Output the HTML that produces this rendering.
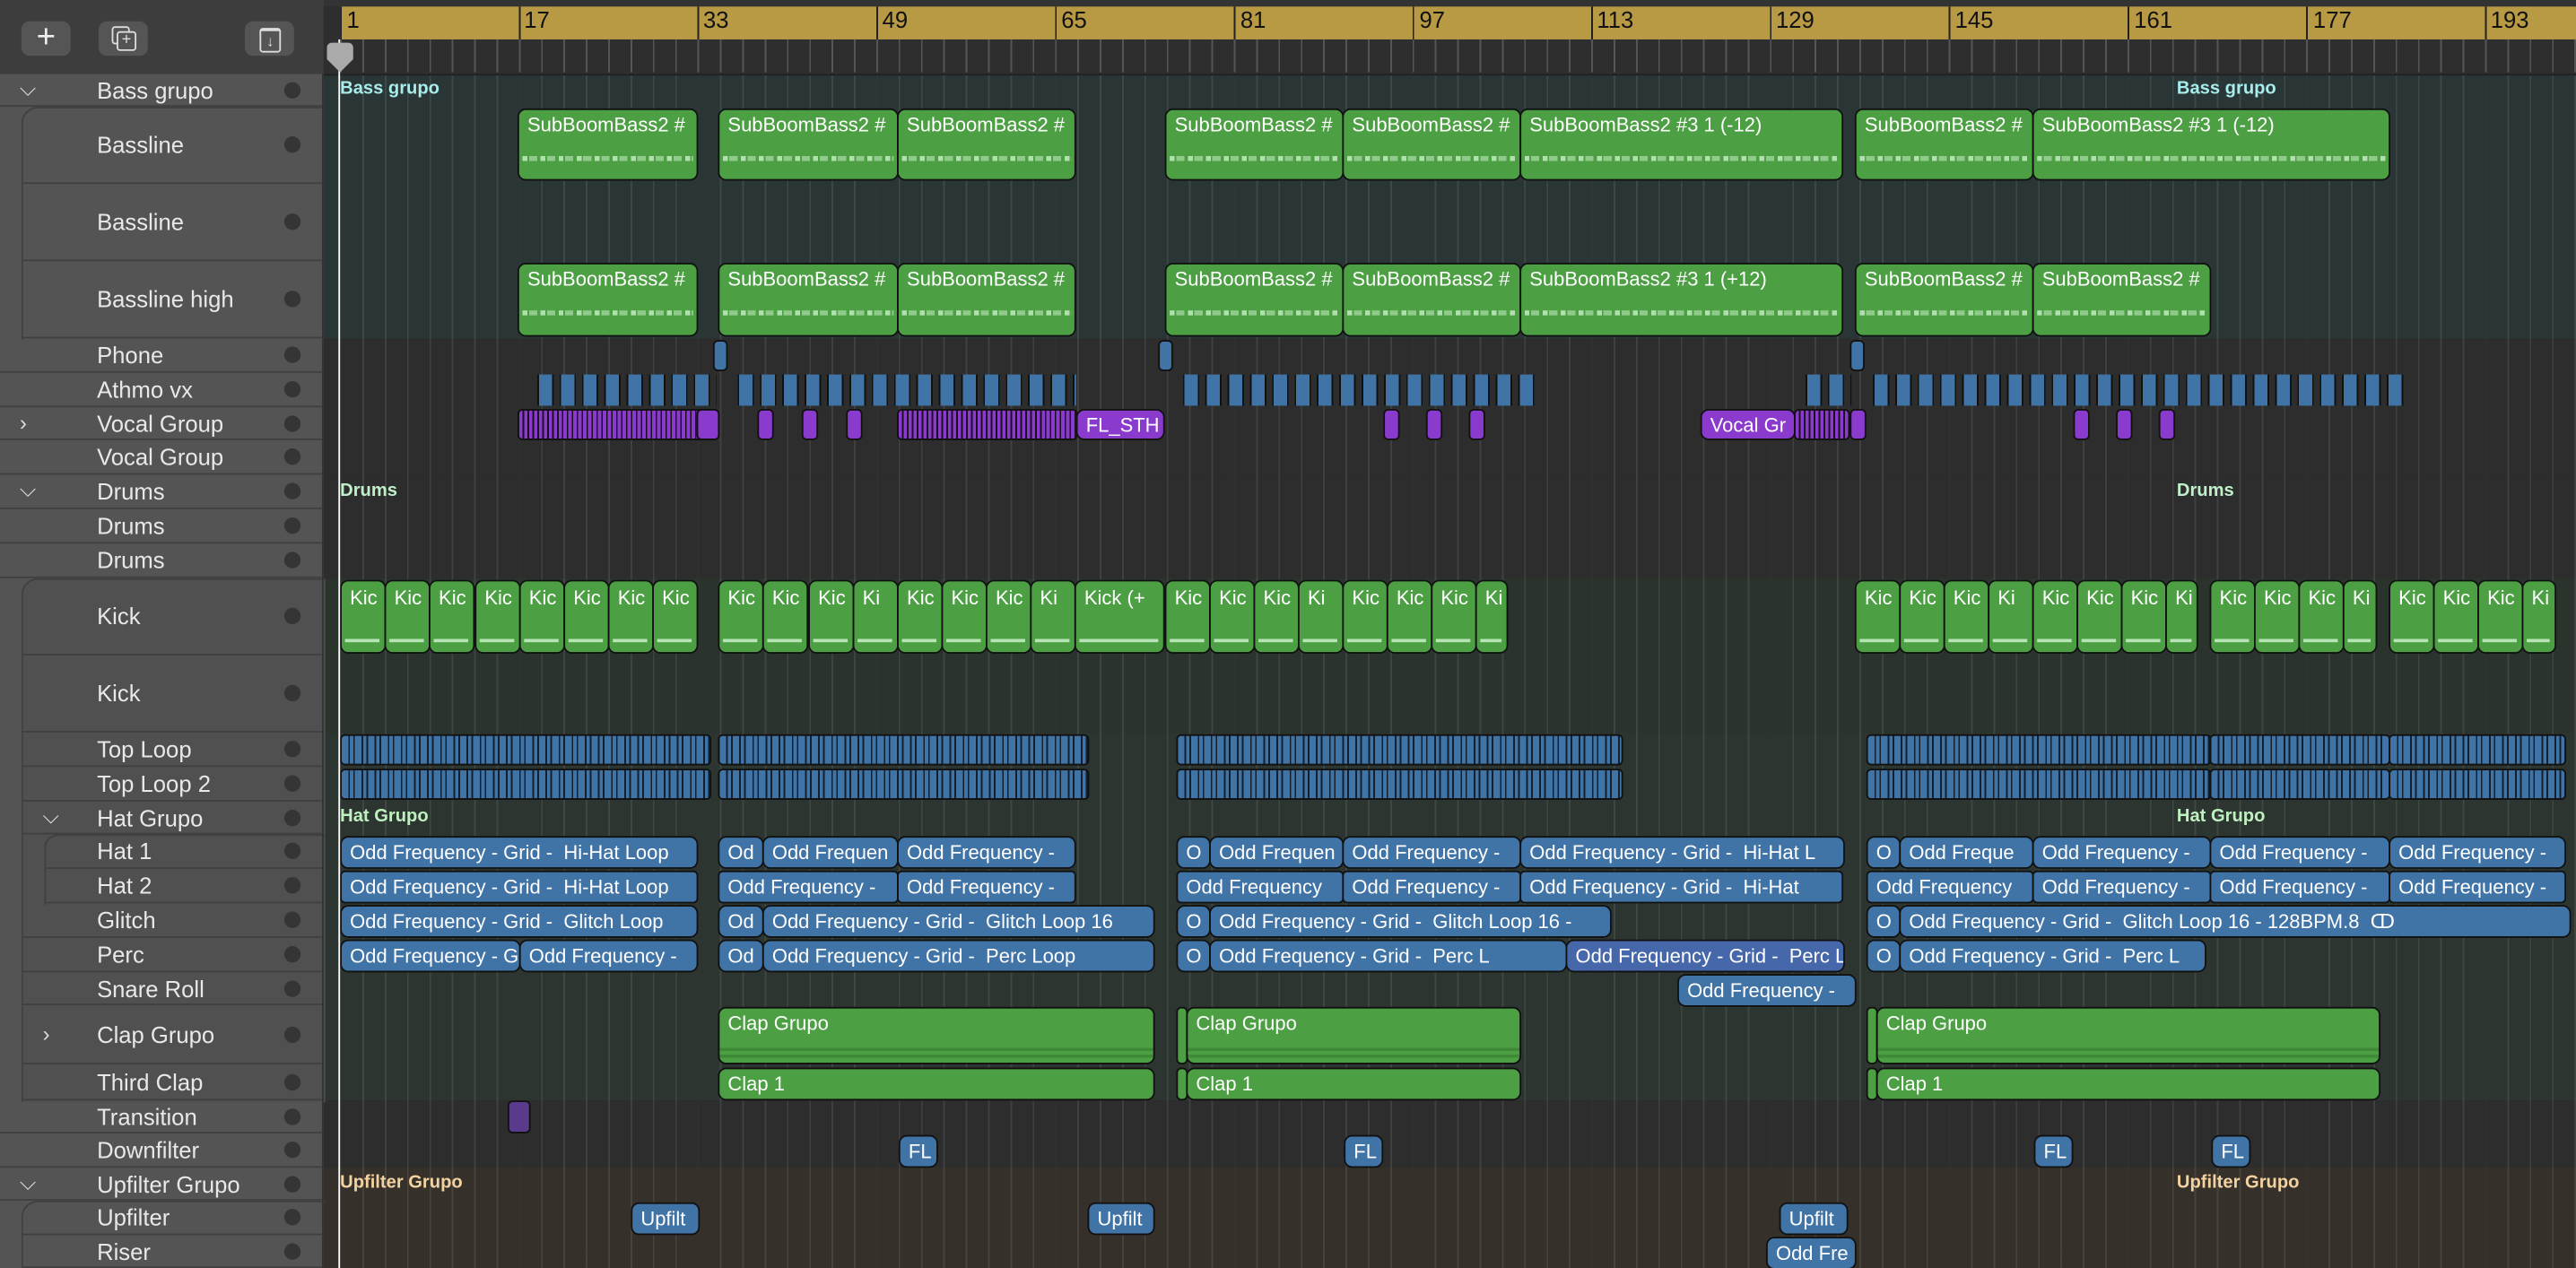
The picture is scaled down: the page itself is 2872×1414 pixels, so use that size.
<!DOCTYPE html>
<html><head><meta charset="utf-8"><style>
html,body{margin:0;padding:0;background:#2d2d2d;width:2872px;height:1414px;overflow:hidden}
#w{position:absolute;left:0;top:0;width:1568px;height:772px;transform:scale(1.83163);transform-origin:0 0;font-family:"Liberation Sans",sans-serif;overflow:hidden;background:#2d2d2d}
.a{position:absolute}
.bg{position:absolute;left:197px;right:0}
.lst{position:absolute;left:0;width:197px;top:45px;bottom:0;background:#545454}
.tr{position:absolute;left:0;width:197px;border-bottom:1px solid #404040;box-sizing:border-box;color:#e8e8e8;font-size:14px}
.tr span{position:absolute;left:59px;top:50%;transform:translateY(-50%)}
.tr i{position:absolute;left:173px;top:50%;margin-top:-5px;width:10px;height:10px;border-radius:50%;background:#353535}
.tr b{position:absolute;left:12px;top:50%;transform:translateY(-55%);font-weight:normal;font-size:13px;color:#ddd}
.r{position:absolute;border:1px solid #111;border-radius:3px;box-sizing:border-box;overflow:hidden;font-size:12px;color:#fff;white-space:nowrap;padding-left:5px;line-height:18px}
.g{background:#4ca043}
.b{background:#4073a6}
.p{background:#8a3acc}
.hp{background:repeating-linear-gradient(90deg,#8a3acc 0 2px,#1c1020 2px 3px)}
.hb{background:repeating-linear-gradient(90deg,#4073a6 0 4px,#142030 4px 5px,#4073a6 5px 7px,#142030 7px 8px)}
.seg{border-radius:5px}
.seg::after{content:"";position:absolute;left:2px;right:2px;top:28px;height:3px;background:repeating-linear-gradient(90deg,rgba(210,245,210,.75) 0 3px,transparent 3px 4px,rgba(210,245,210,.5) 4px 9px,transparent 9px 11px)}
.k{position:absolute;top:353px;height:45px;width:28px;box-sizing:border-box;border:1px solid #111;border-radius:5px;background:#4ca043;color:#fff;font-size:12px;padding:3px 0 0 5px;overflow:hidden;white-space:nowrap}
.k::after{content:"";position:absolute;left:2px;right:3px;top:35px;height:2px;background:rgba(210,245,210,.8)}
.lbl{position:absolute;font-size:11px;font-weight:bold}
.num{position:absolute;top:4px;font-size:14px;color:#111}
</style></head><body><div id="w">

<div class="bg" style="top:45px;height:161px;background:#2a3636"></div>
<div class="bg" style="top:206px;height:83px;background:#2d2d2d"></div>
<div class="bg" style="top:289px;height:63px;background:#2d2d2d"></div>
<div class="bg" style="top:352px;height:94px;background:#2b332d"></div>
<div class="bg" style="top:446px;height:224px;background:#2c3530"></div>
<div class="bg" style="top:670px;height:41px;background:#2d2d2d"></div>
<div class="bg" style="top:711px;height:61px;background:#36302a"></div>
<div class="a" style="left:207px;right:0;top:24px;bottom:0;background:repeating-linear-gradient(90deg,rgba(255,255,255,.09) 0 1px,transparent 1px 13.6px)"></div>
<div class="a" style="left:207px;right:0;top:24px;bottom:0;background:repeating-linear-gradient(90deg,rgba(0,0,0,.25) 0 1px,transparent 1px 108.8px)"></div>

<div class="a" style="left:0;top:0;width:1568px;height:4px;background:#333"></div>
<div class="a" style="left:0;top:0;width:197px;height:45px;background:#3d3d3d;border-bottom:1px solid #2a2a2a"></div>
<div class="a" style="left:13px;top:13px;width:30px;height:21px;background:#555;border-radius:5px;color:#eee;font-size:20px;text-align:center;line-height:20px">+</div>
<div class="a" style="left:60px;top:13px;width:30px;height:21px;background:#555;border-radius:5px"><div class="a" style="left:8px;top:3px;width:9px;height:9px;border:1px solid #ddd;border-radius:2px"></div><div class="a" style="left:11px;top:6px;width:10px;height:10px;border:1px solid #ddd;border-radius:2px;background:#555;color:#ddd;font-size:10px;line-height:10px;text-align:center">+</div></div>
<div class="a" style="left:149px;top:13px;width:30px;height:21px;background:#555;border-radius:5px"><div class="a" style="left:9px;top:4px;width:11px;height:12px;border:1px solid #ddd;border-radius:2px;border-top-width:2px;color:#ddd;font-size:9px;line-height:12px;text-align:center">↓</div></div>
<div class="a" style="left:197px;top:4px;width:1371px;height:41px;background:#2e2e2e;border-bottom:1px solid #222"></div>
<div class="a" style="left:207px;top:4px;width:1361px;height:20px;background:#b89a45"></div>
<div class="a" style="left:207px;top:24px;width:1361px;height:20px;background:repeating-linear-gradient(90deg,#555 0 1px,transparent 1px 13.6px)"></div>
<div class="a" style="left:207px;top:4px;width:1361px;height:20px;background:repeating-linear-gradient(90deg,#222 0 1px,transparent 1px 108.8px)"></div>
<div class="num" style="left:211px">1</div><div class="num" style="left:319px">17</div><div class="num" style="left:428px">33</div><div class="num" style="left:537px">49</div><div class="num" style="left:646px">65</div><div class="num" style="left:755px">81</div><div class="num" style="left:864px">97</div><div class="num" style="left:972px">113</div><div class="num" style="left:1081px">129</div><div class="num" style="left:1190px">145</div><div class="num" style="left:1299px">161</div><div class="num" style="left:1408px">177</div><div class="num" style="left:1516px">193</div>

<div class="lst"></div>
<div class="tr" style="top:45px;height:20px"><b>⌵</b><span>Bass grupo</span><i></i></div>
<div class="a" style="left:13px;top:65px;width:184px;height:141px;border-left:1px solid #404040;border-top:1px solid #404040;border-radius:10px 0 0 0"></div>
<div class="tr" style="top:65px;height:47px;left:14px;width:183px"><span style="left:45px">Bassline</span><i style="left:159px"></i></div>
<div class="tr" style="top:112px;height:47px;left:14px;width:183px"><span style="left:45px">Bassline</span><i style="left:159px"></i></div>
<div class="tr" style="top:159px;height:47px;left:14px;width:183px"><span style="left:45px">Bassline high</span><i style="left:159px"></i></div>
<div class="tr" style="top:206px;height:21px"><span>Phone</span><i></i></div>
<div class="tr" style="top:227px;height:21px"><span>Athmo vx</span><i></i></div>
<div class="tr" style="top:248px;height:20px"><b>›</b><span>Vocal Group</span><i></i></div>
<div class="tr" style="top:268px;height:21px"><span>Vocal Group</span><i></i></div>
<div class="tr" style="top:289px;height:21px"><b>⌵</b><span>Drums</span><i></i></div>
<div class="tr" style="top:310px;height:21px"><span>Drums</span><i></i></div>
<div class="tr" style="top:331px;height:21px"><span>Drums</span><i></i></div>
<div class="a" style="left:13px;top:352px;width:184px;height:318px;border-left:1px solid #404040;border-top:1px solid #404040;border-radius:10px 0 0 0;background:#505050"></div>
<div class="tr" style="top:352px;height:47px;left:14px;width:183px"><span style="left:45px">Kick</span><i style="left:159px"></i></div>
<div class="tr" style="top:399px;height:47px;left:14px;width:183px"><span style="left:45px">Kick</span><i style="left:159px"></i></div>
<div class="tr" style="top:446px;height:21px;left:14px;width:183px"><span style="left:45px">Top Loop</span><i style="left:159px"></i></div>
<div class="tr" style="top:467px;height:21px;left:14px;width:183px"><span style="left:45px">Top Loop 2</span><i style="left:159px"></i></div>
<div class="tr" style="top:488px;height:20px;left:14px;width:183px"><b style="left:12px">⌵</b><span style="left:45px">Hat Grupo</span><i style="left:159px"></i></div>
<div class="a" style="left:27px;top:508px;width:170px;height:42px;border-left:1px solid #404040;border-top:1px solid #404040;border-radius:8px 0 0 0"></div>
<div class="tr" style="top:508px;height:21px;left:28px;width:169px"><span style="left:31px">Hat 1</span><i style="left:145px"></i></div>
<div class="tr" style="top:529px;height:21px;left:28px;width:169px"><span style="left:31px">Hat 2</span><i style="left:145px"></i></div>
<div class="tr" style="top:550px;height:21px;left:14px;width:183px"><span style="left:45px">Glitch</span><i style="left:159px"></i></div>
<div class="tr" style="top:571px;height:21px;left:14px;width:183px"><span style="left:45px">Perc</span><i style="left:159px"></i></div>
<div class="tr" style="top:592px;height:20px;left:14px;width:183px"><span style="left:45px">Snare Roll</span><i style="left:159px"></i></div>
<div class="tr" style="top:612px;height:36px;left:14px;width:183px"><b style="left:12px">›</b><span style="left:45px">Clap Grupo</span><i style="left:159px"></i></div>
<div class="tr" style="top:648px;height:22px;left:14px;width:183px"><span style="left:45px">Third Clap</span><i style="left:159px"></i></div>
<div class="tr" style="top:670px;height:20px"><span>Transition</span><i></i></div>
<div class="tr" style="top:690px;height:21px"><span>Downfilter</span><i></i></div>
<div class="tr" style="top:711px;height:20px"><b>⌵</b><span>Upfilter Grupo</span><i></i></div>
<div class="a" style="left:13px;top:731px;width:184px;height:41px;border-left:1px solid #404040;border-top:1px solid #404040;border-radius:10px 0 0 0"></div>
<div class="tr" style="top:731px;height:21px;left:14px;width:183px"><span style="left:45px">Upfilter</span><i style="left:159px"></i></div>
<div class="tr" style="top:752px;height:20px;left:14px;width:183px"><span style="left:45px">Riser</span><i style="left:159px"></i></div>
<div class="a" style="left:196px;top:45px;width:1px;bottom:0;background:#333"></div>

<div class="lbl" style="left:207px;top:48px;color:#a8ecec">Bass grupo</div><div class="lbl" style="left:1325px;top:48px;color:#a8ecec">Bass grupo</div>
<div class="lbl" style="left:207px;top:293px;color:#bff0c8">Drums</div><div class="lbl" style="left:1325px;top:293px;color:#bff0c8">Drums</div>
<div class="lbl" style="left:207px;top:491px;color:#bff0c0">Hat Grupo</div><div class="lbl" style="left:1325px;top:491px;color:#bff0c0">Hat Grupo</div>
<div class="lbl" style="left:207px;top:714px;color:#f2d2a0">Upfilter Grupo</div><div class="lbl" style="left:1325px;top:714px;color:#f2d2a0">Upfilter Grupo</div>

<div class="r g seg" style="left:315px;top:66px;width:110px;height:44px">SubBoomBass2 #</div>
<div class="r g seg" style="left:437px;top:66px;width:110px;height:44px">SubBoomBass2 #</div>
<div class="r g seg" style="left:546px;top:66px;width:109px;height:44px">SubBoomBass2 #</div>
<div class="r g seg" style="left:709px;top:66px;width:109px;height:44px">SubBoomBass2 #</div>
<div class="r g seg" style="left:817px;top:66px;width:109px;height:44px">SubBoomBass2 #</div>
<div class="r g seg" style="left:925px;top:66px;width:197px;height:44px">SubBoomBass2 #3 1 (-12)</div>
<div class="r g seg" style="left:1129px;top:66px;width:109px;height:44px">SubBoomBass2 #</div>
<div class="r g seg" style="left:1237px;top:66px;width:218px;height:44px">SubBoomBass2 #3 1 (-12)</div>
<div class="r g seg" style="left:315px;top:160px;width:110px;height:45px">SubBoomBass2 #</div>
<div class="r g seg" style="left:437px;top:160px;width:110px;height:45px">SubBoomBass2 #</div>
<div class="r g seg" style="left:546px;top:160px;width:109px;height:45px">SubBoomBass2 #</div>
<div class="r g seg" style="left:709px;top:160px;width:109px;height:45px">SubBoomBass2 #</div>
<div class="r g seg" style="left:817px;top:160px;width:109px;height:45px">SubBoomBass2 #</div>
<div class="r g seg" style="left:925px;top:160px;width:197px;height:45px">SubBoomBass2 #3 1 (+12)</div>
<div class="r g seg" style="left:1129px;top:160px;width:109px;height:45px">SubBoomBass2 #</div>
<div class="r g seg" style="left:1237px;top:160px;width:109px;height:45px">SubBoomBass2 #</div>

<div class="r b" style="left:434px;top:207px;width:9px;height:19px"></div>
<div class="r b" style="left:705px;top:207px;width:9px;height:19px"></div>
<div class="r b" style="left:1126px;top:207px;width:9px;height:19px"></div>
<div class="a" style="left:327px;top:228px;width:109px;height:19px;background:repeating-linear-gradient(90deg,#111 0 1px,#4073a6 1px 9px,#111 9px 10px,transparent 10px 13.6px)"></div>
<div class="a" style="left:449px;top:228px;width:206px;height:19px;background:repeating-linear-gradient(90deg,#111 0 1px,#4073a6 1px 9px,#111 9px 10px,transparent 10px 13.6px)"></div>
<div class="a" style="left:720px;top:228px;width:215px;height:19px;background:repeating-linear-gradient(90deg,#111 0 1px,#4073a6 1px 9px,#111 9px 10px,transparent 10px 13.6px)"></div>
<div class="a" style="left:1099px;top:228px;width:28px;height:19px;background:repeating-linear-gradient(90deg,#111 0 1px,#4073a6 1px 9px,#111 9px 10px,transparent 10px 13.6px)"></div>
<div class="a" style="left:1140px;top:228px;width:324px;height:19px;background:repeating-linear-gradient(90deg,#111 0 1px,#4073a6 1px 9px,#111 9px 10px,transparent 10px 13.6px)"></div>
<div class="r hp" style="left:315px;top:249px;width:123px;height:19px"></div>
<div class="r p" style="left:424px;top:249px;width:14px;height:19px"></div>
<div class="r p" style="left:461px;top:249px;width:10px;height:19px"></div>
<div class="r p" style="left:488px;top:249px;width:10px;height:19px"></div>
<div class="r p" style="left:515px;top:249px;width:10px;height:19px"></div>
<div class="r hp" style="left:546px;top:249px;width:110px;height:19px"></div>
<div class="r p" style="left:655px;top:249px;width:54px;height:19px;border-radius:5px">FL_STH</div>
<div class="r p" style="left:842px;top:249px;width:10px;height:19px"></div>
<div class="r p" style="left:868px;top:249px;width:10px;height:19px"></div>
<div class="r p" style="left:894px;top:249px;width:10px;height:19px"></div>
<div class="r p" style="left:1035px;top:249px;width:58px;height:19px;border-radius:5px">Vocal Gr</div>
<div class="r hp" style="left:1092px;top:249px;width:34px;height:19px"></div>
<div class="r p" style="left:1126px;top:249px;width:10px;height:19px"></div>
<div class="r p" style="left:1262px;top:249px;width:10px;height:19px"></div>
<div class="r p" style="left:1288px;top:249px;width:10px;height:19px"></div>
<div class="r p" style="left:1314px;top:249px;width:10px;height:19px"></div>

<div class="k" style="left:207px">Kic</div><div class="k" style="left:234px">Kic</div><div class="k" style="left:261px">Kic</div><div class="k" style="left:289px">Kic</div><div class="k" style="left:316px">Kic</div><div class="k" style="left:343px">Kic</div><div class="k" style="left:370px">Kic</div><div class="k" style="left:397px">Kic</div>
<div class="k" style="left:437px">Kic</div><div class="k" style="left:464px">Kic</div><div class="k" style="left:492px">Kic</div><div class="k" style="left:519px">Ki</div>
<div class="k" style="left:546px">Kic</div><div class="k" style="left:573px">Kic</div><div class="k" style="left:600px">Kic</div><div class="k" style="left:627px">Ki</div>
<div class="k" style="left:654px;width:55px">Kick (+</div>
<div class="k" style="left:709px">Kic</div><div class="k" style="left:736px">Kic</div><div class="k" style="left:763px">Kic</div><div class="k" style="left:790px">Ki</div>
<div class="k" style="left:817px">Kic</div><div class="k" style="left:844px">Kic</div><div class="k" style="left:871px">Kic</div><div class="k" style="left:898px;width:20px">Ki</div>
<div class="k" style="left:1129px">Kic</div><div class="k" style="left:1156px">Kic</div><div class="k" style="left:1183px">Kic</div><div class="k" style="left:1210px">Ki</div>
<div class="k" style="left:1237px">Kic</div><div class="k" style="left:1264px">Kic</div><div class="k" style="left:1291px">Kic</div><div class="k" style="left:1318px;width:20px">Ki</div>
<div class="k" style="left:1345px">Kic</div><div class="k" style="left:1372px">Kic</div><div class="k" style="left:1399px">Kic</div><div class="k" style="left:1426px;width:21px">Ki</div>
<div class="k" style="left:1454px">Kic</div><div class="k" style="left:1481px">Kic</div><div class="k" style="left:1508px">Kic</div><div class="k" style="left:1535px;width:21px">Ki</div>

<div class="r hb" style="left:207px;top:447px;width:226px;height:19px"></div>
<div class="r hb" style="left:437px;top:447px;width:226px;height:19px"></div>
<div class="r hb" style="left:716px;top:447px;width:272px;height:19px"></div>
<div class="r hb" style="left:1136px;top:447px;width:210px;height:19px"></div>
<div class="r hb" style="left:1345px;top:447px;width:110px;height:19px"></div>
<div class="r hb" style="left:1454px;top:447px;width:108px;height:19px"></div>
<div class="r hb" style="left:207px;top:468px;width:226px;height:19px"></div>
<div class="r hb" style="left:437px;top:468px;width:226px;height:19px"></div>
<div class="r hb" style="left:716px;top:468px;width:272px;height:19px"></div>
<div class="r hb" style="left:1136px;top:468px;width:210px;height:19px"></div>
<div class="r hb" style="left:1345px;top:468px;width:110px;height:19px"></div>
<div class="r hb" style="left:1454px;top:468px;width:108px;height:19px"></div>

<div class="r b" style="left:207px;top:509px;width:218px;height:20px;border-radius:5px">Odd Frequency - Grid -&nbsp; Hi-Hat Loop</div>
<div class="r b" style="left:437px;top:509px;width:28px;height:20px;border-radius:5px">Od</div>
<div class="r b" style="left:464px;top:509px;width:83px;height:20px;border-radius:5px">Odd Frequen</div>
<div class="r b" style="left:546px;top:509px;width:109px;height:20px;border-radius:5px">Odd Frequency -</div>
<div class="r b" style="left:716px;top:509px;width:21px;height:20px;border-radius:5px">O</div>
<div class="r b" style="left:736px;top:509px;width:82px;height:20px;border-radius:5px">Odd Frequen</div>
<div class="r b" style="left:817px;top:509px;width:109px;height:20px;border-radius:5px">Odd Frequency -</div>
<div class="r b" style="left:925px;top:509px;width:198px;height:20px;border-radius:5px">Odd Frequency - Grid -&nbsp; Hi-Hat L</div>
<div class="r b" style="left:1136px;top:509px;width:21px;height:20px;border-radius:5px">O</div>
<div class="r b" style="left:1156px;top:509px;width:82px;height:20px;border-radius:5px">Odd Freque</div>
<div class="r b" style="left:1237px;top:509px;width:109px;height:20px;border-radius:5px">Odd Frequency -</div>
<div class="r b" style="left:1345px;top:509px;width:110px;height:20px;border-radius:5px">Odd Frequency -</div>
<div class="r b" style="left:1454px;top:509px;width:108px;height:20px;border-radius:5px">Odd Frequency -</div>
<div class="r b" style="left:207px;top:530px;width:218px;height:20px">Odd Frequency - Grid -&nbsp; Hi-Hat Loop</div>
<div class="r b" style="left:437px;top:530px;width:110px;height:20px">Odd Frequency -</div>
<div class="r b" style="left:546px;top:530px;width:109px;height:20px">Odd Frequency -</div>
<div class="r b" style="left:716px;top:530px;width:102px;height:20px">Odd Frequency</div>
<div class="r b" style="left:817px;top:530px;width:109px;height:20px">Odd Frequency -</div>
<div class="r b" style="left:925px;top:530px;width:197px;height:20px">Odd Frequency - Grid -&nbsp; Hi-Hat</div>
<div class="r b" style="left:1136px;top:530px;width:102px;height:20px">Odd Frequency</div>
<div class="r b" style="left:1237px;top:530px;width:109px;height:20px">Odd Frequency -</div>
<div class="r b" style="left:1345px;top:530px;width:110px;height:20px">Odd Frequency -</div>
<div class="r b" style="left:1454px;top:530px;width:108px;height:20px">Odd Frequency -</div>
<div class="r b" style="left:207px;top:551px;width:218px;height:20px;border-radius:5px">Odd Frequency - Grid -&nbsp; Glitch Loop</div>
<div class="r b" style="left:437px;top:551px;width:28px;height:20px;border-radius:5px">Od</div>
<div class="r b" style="left:464px;top:551px;width:239px;height:20px;border-radius:5px">Odd Frequency - Grid -&nbsp; Glitch Loop 16</div>
<div class="r b" style="left:716px;top:551px;width:21px;height:20px;border-radius:5px">O</div>
<div class="r b" style="left:736px;top:551px;width:245px;height:20px;border-radius:5px">Odd Frequency - Grid -&nbsp; Glitch Loop 16 -</div>
<div class="r b" style="left:1136px;top:551px;width:21px;height:20px;border-radius:5px">O</div>
<div class="r b" style="left:1156px;top:551px;width:409px;height:20px;border-radius:5px">Odd Frequency - Grid -&nbsp; Glitch Loop 16 - 128BPM.8 &nbsp;ↀ</div>
<div class="r b" style="left:207px;top:572px;width:110px;height:20px;border-radius:5px">Odd Frequency - Grid -</div>
<div class="r b" style="left:316px;top:572px;width:109px;height:20px;border-radius:5px">Odd Frequency -</div>
<div class="r b" style="left:437px;top:572px;width:28px;height:20px;border-radius:5px">Od</div>
<div class="r b" style="left:464px;top:572px;width:239px;height:20px;border-radius:5px">Odd Frequency - Grid -&nbsp; Perc Loop</div>
<div class="r b" style="left:716px;top:572px;width:21px;height:20px;border-radius:5px">O</div>
<div class="r b" style="left:736px;top:572px;width:218px;height:20px;border-radius:5px">Odd Frequency - Grid -&nbsp; Perc L</div>
<div class="r b" style="left:953px;top:572px;width:170px;height:20px;border-radius:5px;background:#4668aa">Odd Frequency - Grid -&nbsp; Perc Lo</div>
<div class="r b" style="left:1136px;top:572px;width:21px;height:20px;border-radius:5px">O</div>
<div class="r b" style="left:1156px;top:572px;width:187px;height:20px;border-radius:5px">Odd Frequency - Grid -&nbsp; Perc L</div>
<div class="r b" style="left:1021px;top:593px;width:109px;height:20px;border-radius:5px">Odd Frequency -</div>

<div class="r g" style="left:437px;top:613px;width:266px;height:35px;border-radius:5px;background:linear-gradient(180deg,#4ca043 0 24px,#3e8a36 24px 26px,#4ca043 26px 28px,#3e8a36 28px 30px,#4ca043 30px)">Clap Grupo</div>
<div class="r g" style="left:716px;top:613px;width:7px;height:35px"></div>
<div class="r g" style="left:722px;top:613px;width:204px;height:35px;border-radius:5px;background:linear-gradient(180deg,#4ca043 0 24px,#3e8a36 24px 26px,#4ca043 26px 28px,#3e8a36 28px 30px,#4ca043 30px)">Clap Grupo</div>
<div class="r g" style="left:1136px;top:613px;width:7px;height:35px"></div>
<div class="r g" style="left:1142px;top:613px;width:307px;height:35px;border-radius:5px;background:linear-gradient(180deg,#4ca043 0 24px,#3e8a36 24px 26px,#4ca043 26px 28px,#3e8a36 28px 30px,#4ca043 30px)">Clap Grupo</div>
<div class="r g" style="left:437px;top:650px;width:266px;height:20px;border-radius:5px">Clap 1</div>
<div class="r g" style="left:716px;top:650px;width:7px;height:20px"></div>
<div class="r g" style="left:722px;top:650px;width:204px;height:20px;border-radius:5px">Clap 1</div>
<div class="r g" style="left:1136px;top:650px;width:7px;height:20px"></div>
<div class="r g" style="left:1142px;top:650px;width:307px;height:20px;border-radius:5px">Clap 1</div>

<div class="r p" style="left:309px;top:670px;width:14px;height:20px;background:#5a3a8a"></div>
<div class="r b" style="left:547px;top:691px;width:24px;height:20px;border-radius:5px">FL</div>
<div class="r b" style="left:818px;top:691px;width:24px;height:20px;border-radius:5px">FL</div>
<div class="r b" style="left:1238px;top:691px;width:24px;height:20px;border-radius:5px">FL</div>
<div class="r b" style="left:1346px;top:691px;width:24px;height:20px;border-radius:5px">FL</div>
<div class="r b" style="left:384px;top:732px;width:42px;height:20px;border-radius:5px">Upfilt</div>
<div class="r b" style="left:662px;top:732px;width:41px;height:20px;border-radius:5px">Upfilt</div>
<div class="r b" style="left:1083px;top:732px;width:42px;height:20px;border-radius:5px">Upfilt</div>
<div class="r b" style="left:1075px;top:753px;width:55px;height:20px;border-radius:5px">Odd Fre</div>

<div class="a" style="left:206px;top:24px;width:1px;bottom:0;background:#fff"></div>
<div class="a" style="left:199px;top:26px;width:16px;height:10px;background:#aaa;border-radius:3px 3px 0 0"></div>
<div class="a" style="left:199px;top:36px;width:0;height:0;border-left:8px solid transparent;border-right:8px solid transparent;border-top:8px solid #aaa"></div>
</div></body></html>
